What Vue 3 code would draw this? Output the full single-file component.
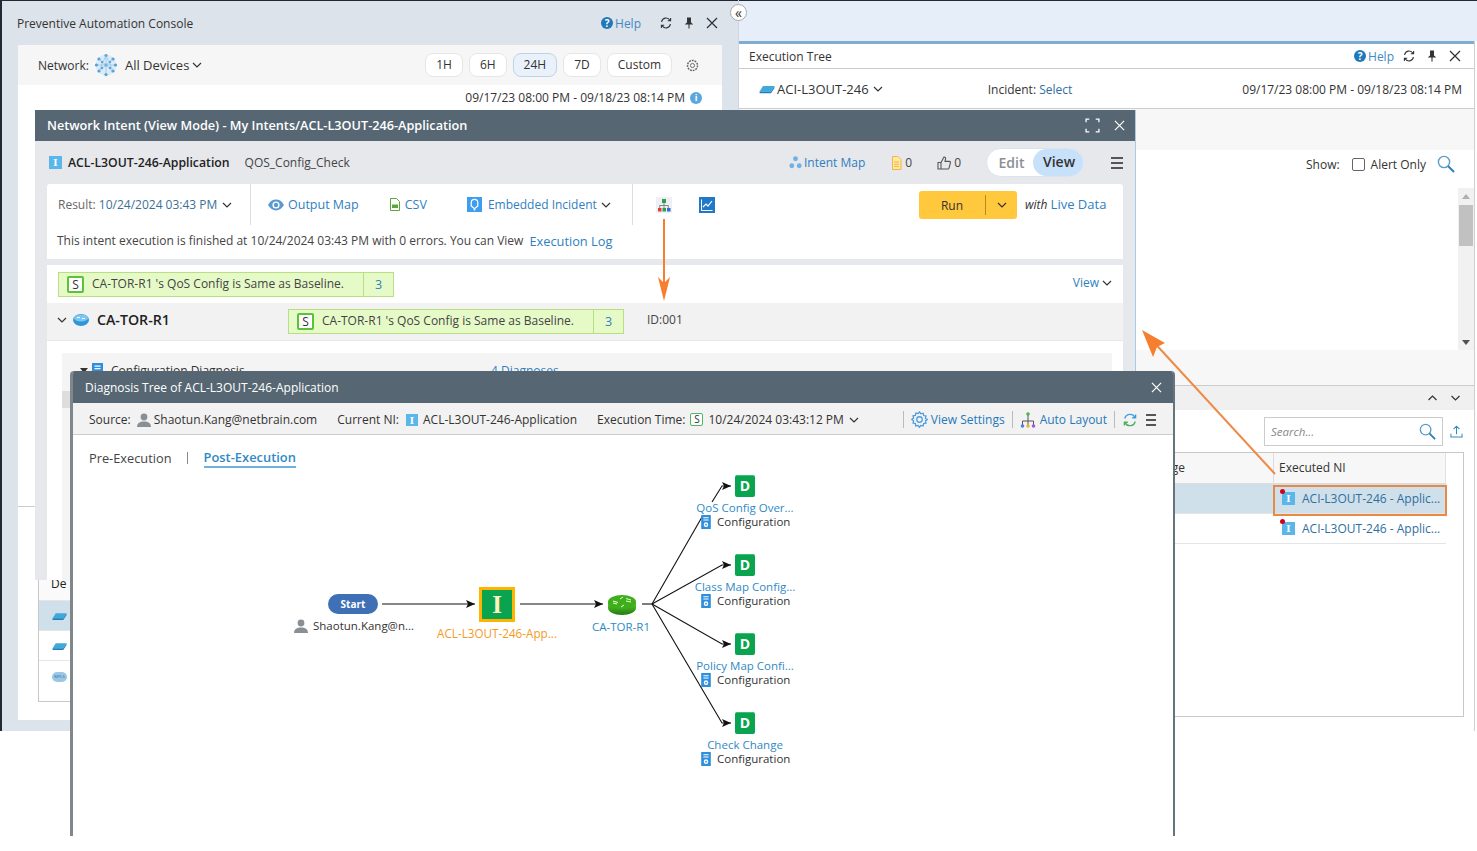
<script setup>
const ranges = [
  { label: '1H' },
  { label: '6H' },
  { label: '24H', active: true },
  { label: '7D' },
  { label: 'Custom' }
]
const ox = 73
const oy = 435
const diagnoses = [
  { name: 'QoS Config Over...', y: 475 },
  { name: 'Class Map Config...', y: 554 },
  { name: 'Policy Map Confi...', y: 633 },
  { name: 'Check Change', y: 712 }
]
const pos = (x, y) => ({ left: x - ox + 'px', top: y - oy + 'px' })
</script>

<template>
  <div class="desk">
    <svg class="defs" width="0" height="0">
      <defs>
        <symbol id="i-close" viewBox="0 0 12 12"><path d="M1 1l10 10M11 1L1 11" fill="none" stroke="currentColor" stroke-width="1.3" /></symbol>
        <symbol id="i-refresh" viewBox="0 0 12 12"><path d="M10 3.400A4.500 4.500 0 0 0 1.600 5M2 8.600A4.500 4.500 0 0 0 10.400 7M10.600 1v2.800H7.800M1.400 11V8.200h2.800" fill="none" stroke="currentColor" stroke-width="1.100" /></symbol>
        <symbol id="i-pin" viewBox="0 0 8 12"><path d="M2 1h4M2.600 1v4.600L1 7h6L5.400 5.600V1M4 7v4.600" fill="currentColor" stroke="currentColor" stroke-width="1.100" /></symbol>
        <symbol id="i-chev" viewBox="0 0 10 6"><path d="M1 1l4 4 4-4" fill="none" stroke="currentColor" stroke-width="1.200" /></symbol>
        <symbol id="i-switch" viewBox="0 0 16 9"><path d="M4 1h11.500L12 6.400H.6z" fill="#3fa9de" /><path d="M.6 6.400H12v1.800H.6zM12 6.400L15.500 1v2L12 8.200z" fill="#1e7fb8" /></symbol>
        <symbol id="i-config" viewBox="0 0 11 16"><path d="M0 0h11v16H0z" fill="#2f8fdc" /><path d="M2.500 2.500h6v1.200h-6zM2.500 5h6v1.200h-6z" fill="#fff" /><circle cx="5.500" cy="11" r="2.600" fill="#fff" /><circle cx="5.500" cy="11" r="1" fill="#2f8fdc" /></symbol>
        <symbol id="i-person" viewBox="0 0 14 14"><circle cx="7" cy="4" r="3.400" fill="#8a8f94" /><path d="M0 14c0-4 3-5.600 7-5.600s7 1.600 7 5.600z" fill="#8a8f94" /></symbol>
        <symbol id="i-search" viewBox="0 0 18 18"><circle cx="7" cy="7" r="5.600" fill="none" stroke="#5a9bc9" stroke-width="1.400" /><path d="M11 11l6 6" stroke="#2f7fb8" stroke-width="2" /></symbol>
      </defs>
    </svg>

    <!-- Left console window -->
    <section class="console">
      <header class="console-title">
        <span class="title-text">Preventive Automation Console</span>
        <span class="win-tools">
          <span class="help"><b class="help-dot">?</b>Help</span>
          <svg class="tool refresh"><use href="#i-refresh" /></svg>
          <svg class="tool pin"><use href="#i-pin" /></svg>
          <svg class="tool"><use href="#i-close" /></svg>
        </span>
      </header>
      <div class="console-card">
        <div class="console-bar">
          <span class="net-label">Network:</span>
          <svg class="net-icon" viewBox="0 0 24 24">
            <circle cx="12" cy="12" r="10.500" fill="#dcebf7" />
            <g fill="#4f9ed6">
              <circle cx="12" cy="2.500" r="1.600" /><circle cx="5" cy="6" r="1.600" /><circle cx="19" cy="6" r="1.600" />
              <circle cx="2.500" cy="12" r="1.600" /><circle cx="21.500" cy="12" r="1.600" /><circle cx="12" cy="12" r="1.600" />
              <circle cx="5" cy="18" r="1.600" /><circle cx="19" cy="18" r="1.600" /><circle cx="12" cy="21.500" r="1.600" />
              <circle cx="8" cy="9" r="1.200" /><circle cx="16" cy="9" r="1.200" /><circle cx="8" cy="15" r="1.200" /><circle cx="16" cy="15" r="1.200" />
            </g>
            <path d="M12 2.500L5 18M12 2.500L19 18M2.500 12h19M5 6l14 12M19 6L5 18M12 2.500v19" stroke="#7fb9e0" stroke-width=".6" />
          </svg>
          <span class="net-name">All Devices</span>
          <svg class="chev"><use href="#i-chev" /></svg>
          <span class="ranges">
            <span v-for="r in ranges" :key="r.label" class="range" :class="{ 'range-on': r.active }">{{ r.label }}</span>
          </span>
          <svg class="cog" viewBox="0 0 14 14"><circle cx="7" cy="7" r="5.400" fill="none" stroke="#666" stroke-width="1.600" stroke-dasharray="2 1" /><circle cx="7" cy="7" r="2.200" fill="none" stroke="#666" /></svg>
        </div>
        <div class="console-date">
          09/17/23 08:00 PM - 09/18/23 08:14 PM
          <b class="info-dot">i</b>
        </div>
        <div class="back-table">
          <div class="back-head">De</div>
          <div class="back-row back-sel"><svg class="back-switch"><use href="#i-switch" /></svg></div>
          <div class="back-row"><svg class="back-switch"><use href="#i-switch" /></svg></div>
          <div class="back-row"><span class="back-cloud">MPLS</span></div>
        </div>
        <div class="console-rule"></div>
      </div>
    </section>

    <button class="collapse">«</button>

    <!-- Right execution tree window -->
    <section class="tree-win">
      <div class="tree-band"></div>
      <header class="tree-title">
        <span class="title-text">Execution Tree</span>
        <span class="win-tools">
          <span class="help tree-help"><b class="help-dot">?</b>Help</span>
          <svg class="tool refresh"><use href="#i-refresh" /></svg>
          <svg class="tool pin"><use href="#i-pin" /></svg>
          <svg class="tool"><use href="#i-close" /></svg>
        </span>
      </header>
      <div class="tree-filter">
        <svg class="tree-switch"><use href="#i-switch" /></svg>
        <span class="tree-device">ACI-L3OUT-246</span>
        <svg class="chev"><use href="#i-chev" /></svg>
        <span class="incident">Incident: <a class="link-dark">Select</a></span>
        <span class="tree-date">09/17/23 08:00 PM - 09/18/23 08:14 PM</span>
      </div>
      <div class="tree-grey"></div>
      <div class="tree-show">
        <span>Show:</span>
        <span class="check"></span>
        <span>Alert Only</span>
        <svg class="show-search"><use href="#i-search" /></svg>
      </div>
      <div class="tree-scroll-area">
        <div class="scrollbar">
          <span class="sb-up"></span>
          <span class="sb-thumb"></span>
          <span class="sb-down"></span>
        </div>
      </div>
      <div class="tree-grey tree-grey2"></div>
      <div class="tree-lower-head">
        <svg class="flip"><use href="#i-chev" /></svg>
        <svg class="lower-chev"><use href="#i-chev" /></svg>
      </div>
      <div class="tree-search-row">
        <div class="search-box">
          <span>Search...</span>
          <svg class="search-ic"><use href="#i-search" /></svg>
        </div>
        <svg class="upload" viewBox="0 0 14 14"><path d="M7 10V1.500M3.800 4.400L7 1.200l3.200 3.200M1 9.500v3.400h12V9.500" fill="none" stroke="#2f8fb8" stroke-width="1.100" /></svg>
      </div>
      <div class="exec-table">
        <div class="exec-head">
          <span class="exec-msg">Message</span>
          <span class="exec-ni">Executed NI</span>
        </div>
        <div class="exec-row exec-sel">
          <span class="exec-cell">
            <span class="ni-flag"><span class="ni-i">I</span><i class="red"></i></span>
            <a class="link-dark">ACI-L3OUT-246 - Applic...</a>
          </span>
        </div>
        <div class="exec-row">
          <span class="exec-cell">
            <span class="ni-flag"><span class="ni-i">I</span><i class="red"></i></span>
            <a class="link-dark">ACI-L3OUT-246 - Applic...</a>
          </span>
        </div>
      </div>
    </section>

    <!-- Network Intent window -->
    <section class="intent">
      <header class="dark-head intent-head">
        <span class="intent-title">Network Intent (View Mode) - My Intents/ACL-L3OUT-246-Application</span>
        <svg class="expand" viewBox="0 0 14 14"><path d="M1 4V1h3M10 1h3v3M13 10v3h-3M4 13H1v-3" fill="none" stroke="#fff" stroke-width="1.200" /></svg>
        <svg class="head-close"><use href="#i-close" /></svg>
      </header>
      <div class="intent-info">
        <span class="ni-i">I</span>
        <b class="intent-name">ACL-L3OUT-246-Application</b>
        <span class="intent-sub">QOS_Config_Check</span>
        <span class="intent-right">
          <svg class="map-ic" viewBox="0 0 14 14"><circle cx="7" cy="3" r="2.600" fill="#6fb0e6" /><circle cx="3" cy="10.500" r="2.600" fill="#6fb0e6" /><circle cx="11" cy="10.500" r="2.600" fill="#6fb0e6" /></svg>
          <a class="link">Intent Map</a>
          <svg class="note-ic" viewBox="0 0 10 14"><path d="M1 .5h5.500l3 3v10H1z" fill="#ffe9a8" stroke="#f0b73f" /><path d="M2.600 6h5M2.600 8.200h5M2.600 10.400h5" stroke="#f0b73f" /></svg>
          <span class="count">0</span>
          <svg class="thumb-ic" viewBox="0 0 14 14"><path d="M1 6.500h3v6.500H1zM4 6.500L7 1c1.600 0 1.800 1.200 1.400 2.400L8 5.400h4.400c.8 0 1.200.8 1 1.400l-1.400 5.400c-.2.6-.6.8-1.200.8H4" fill="none" stroke="#555" stroke-width="1.100" /></svg>
          <span class="count">0</span>
          <span class="mode">
            <span class="mode-edit">Edit</span>
            <span class="mode-view">View</span>
          </span>
          <span class="burger"><i></i><i></i><i></i></span>
        </span>
      </div>
      <div class="result-card">
        <div class="result-bar">
          <span class="res-group">
            <span class="res-text">Result: <span class="res-time">10/24/2024 03:43 PM</span></span>
            <svg class="chev"><use href="#i-chev" /></svg>
          </span>
          <span class="actions">
            <svg class="eye" viewBox="0 0 16 12"><path d="M0 6c2-3.600 4.800-5.400 8-5.400S14 2.400 16 6c-2 3.600-4.800 5.400-8 5.400S2 9.600 0 6z" fill="#5a9ad0" /><circle cx="8" cy="6" r="3.600" fill="#fff" /><circle cx="8" cy="6" r="2.200" fill="#5a9ad0" /></svg>
            <a class="link act">Output Map</a>
            <svg class="csv" viewBox="0 0 10 13"><path d="M.5.5h6l3 3v9H.5z" fill="#fff" stroke="#5da63a" /><path d="M2 6.500h6v3.500H2z" fill="#5da63a" /></svg>
            <a class="link act">CSV</a>
            <svg class="bell" viewBox="0 0 16 16"><path d="M0 0h16v16H0z" fill="#3f9df0" /><path d="M8 2.500a3.500 3.500 0 0 0-3.500 3.500v3.500L8 12.500l3.500-3V6A3.500 3.500 0 0 0 8 2.500z" fill="none" stroke="#fff" stroke-width="1.300" /><circle cx="8" cy="13.500" r="1" fill="#fff" /></svg>
            <a class="link act act-inc">Embedded Incident</a>
            <svg class="chev"><use href="#i-chev" /></svg>
          </span>
          <span class="tool-icons">
            <svg class="tree-ic" viewBox="0 0 16 16"><path d="M0 0h16v16H0z" fill="#eef0f3" /><path d="M6 2h4v4H6z" fill="#2e9e4f" /><path d="M2 11h3.500v3.500H2z" fill="#e23a3a" /><path d="M6.500 11H10v3.500H6.500z" fill="#2e9e4f" /><path d="M11 11h3.500v3.500H11z" fill="#2f6fd0" /><path d="M8 6v5M3.700 11V8.500h8.600V11" fill="none" stroke="#888" /></svg>
            <svg class="chart-ic" viewBox="0 0 16 16"><path d="M0 0h16v16H0z" fill="#1f78c8" /><path d="M2.500 2.500v11h11" fill="none" stroke="#fff" /><path d="M4 10l3-3 2 2 4-5" fill="none" stroke="#fff" stroke-width="1.200" /></svg>
          </span>
          <span class="run">
            <span class="run-label">Run</span>
            <span class="run-sep"></span>
            <svg class="run-chev"><use href="#i-chev" /></svg>
          </span>
          <span class="live"><em>with</em> <a class="link">Live Data</a></span>
        </div>
        <div class="result-msg">
          <span>This intent execution is finished at 10/24/2024 03:43 PM with 0 errors. You can View</span>
          <a class="link log">Execution Log</a>
        </div>
      </div>
      <div class="detail-card">
        <div class="sum-row">
          <div class="status">
            <span class="status-s">S</span>
            <span class="status-text">CA-TOR-R1 's QoS Config is Same as Baseline.</span>
            <span class="status-n">3</span>
          </div>
          <span class="view-link"><a class="link">View</a><svg class="chev"><use href="#i-chev" /></svg></span>
        </div>
        <div class="device-row">
          <svg class="dev-chev"><use href="#i-chev" /></svg>
          <svg class="dev-ic" viewBox="0 0 16 12"><ellipse cx="8" cy="6" rx="8" ry="6" fill="#2f95d8" /><ellipse cx="8" cy="4" rx="7" ry="3.600" fill="#7cc6f0" /><path d="M4 3.500h3M9 4.500h3" stroke="#fff" /></svg>
          <b class="dev-name">CA-TOR-R1</b>
          <div class="status status2">
            <span class="status-s">S</span>
            <span class="status-text">CA-TOR-R1 's QoS Config is Same as Baseline.</span>
            <span class="status-n">3</span>
          </div>
          <span class="dev-id">ID:001</span>
        </div>
        <div class="config-wrap">
          <div class="config">
            <div class="config-line">
              <span class="cfg-caret"></span>
              <svg class="cfg-ic"><use href="#i-config" /></svg>
              <span class="cfg-name">Configuration Diagnosis</span>
              <a class="link cfg-count">4 Diagnoses</a>
            </div>
            <div class="config-strip"></div>
          </div>
        </div>
      </div>
    </section>

    <!-- Diagnosis tree window -->
    <section class="diag">
      <header class="dark-head diag-head">
        <span class="diag-title">Diagnosis Tree of ACL-L3OUT-246-Application</span>
        <svg class="head-close diag-close"><use href="#i-close" /></svg>
      </header>
      <div class="diag-bar">
        <span>Source:</span>
        <svg class="person"><use href="#i-person" /></svg>
        <span class="src-name">Shaotun.Kang@netbrain.com</span>
        <span class="cur-label">Current NI:</span>
        <span class="ni-i ni-sm">I</span>
        <span class="cur-name">ACL-L3OUT-246-Application</span>
        <span class="exe-label">Execution Time:</span>
        <span class="s-mini">S</span>
        <span class="exe-time">10/24/2024 03:43:12 PM</span>
        <svg class="chev"><use href="#i-chev" /></svg>
        <span class="bar-tools">
          <span class="vsep"></span>
          <svg class="gear" viewBox="0 0 16 16"><path d="M8 .8l1.300 1.800 2.200-.5.400 2.200 2.200.5-.5 2.200L15.400 8l-1.800 1.300.5 2.200-2.200.4-.5 2.200-2.200-.5L8 15.400l-1.300-1.800-2.200.5-.4-2.200-2.200-.5.5-2.200L.6 8l1.800-1.300-.5-2.200 2.200-.4.500-2.200 2.200.5z" fill="none" stroke="#4f9be0" stroke-width="1.200" /><circle cx="8" cy="8" r="2.600" fill="none" stroke="#4f9be0" stroke-width="1.200" /></svg>
          <a class="link-strong">View Settings</a>
          <span class="vsep"></span>
          <svg class="auto" viewBox="0 0 16 16"><path d="M8 2.500V9M2.500 13V9h11v4M8 9v4" fill="none" stroke="#555" /><circle cx="8" cy="2" r="1.800" fill="#57b04f" /><circle cx="2.500" cy="14" r="1.800" fill="#4f7fe0" /><circle cx="8" cy="14" r="1.800" fill="#f0b040" /><circle cx="13.500" cy="14" r="1.800" fill="#9a60d0" /></svg>
          <a class="link-strong">Auto Layout</a>
          <span class="vsep"></span>
          <svg class="sync" viewBox="0 0 14 14"><path d="M11.800 4.200A5.400 5.400 0 0 0 1.800 5.500" fill="none" stroke="#3f9be0" stroke-width="1.400" /><path d="M2.200 9.800a5.400 5.400 0 0 0 10-1.300" fill="none" stroke="#4fb060" stroke-width="1.400" /><path d="M12.600 1.400v3.400H9.200" fill="none" stroke="#3f9be0" stroke-width="1.400" /><path d="M1.400 12.600V9.200h3.400" fill="none" stroke="#4fb060" stroke-width="1.400" /></svg>
          <span class="burger burger-sm"><i></i><i></i><i></i></span>
        </span>
      </div>
      <div class="canvas">
        <div class="tabs">
          <span class="tab">Pre-Execution</span>
          <span class="tab-sep"></span>
          <span class="tab-on">Post-Execution</span>
        </div>
        <svg class="edges" viewBox="73 435 1100 401">
          <defs>
            <marker id="ah" markerWidth="10" markerHeight="8" refX="9" refY="4" orient="auto" markerUnits="userSpaceOnUse"><path d="M0 0l9 4-9 4 2-4z" fill="#111" /></marker>
          </defs>
          <g fill="none" stroke="#111" stroke-width="1.100">
            <path d="M382 604H475" marker-end="url(#ah)" />
            <path d="M520 604H603" marker-end="url(#ah)" />
            <path d="M642 604H652" />
            <path d="M652 604L702 517" />
            <path d="M712 502L722 486H731" marker-end="url(#ah)" />
            <path d="M652 604L722 565H731" marker-end="url(#ah)" />
            <path d="M652 604L722 644H731" marker-end="url(#ah)" />
            <path d="M652 604L722 723H731" marker-end="url(#ah)" />
          </g>
        </svg>

        <span class="start" :style="pos(328, 594)">Start</span>
        <span class="who" :style="pos(294, 618)">
          <svg class="person"><use href="#i-person" /></svg>
          <span>Shaotun.Kang@n...</span>
        </span>
        <span class="i-node" :style="pos(479, 587)">I</span>
        <span class="node-label orange" :style="pos(427, 625)">ACL-L3OUT-246-App...</span>
        <svg class="router" :style="pos(608, 595)" viewBox="0 0 28 20">
          <defs><linearGradient id="rg" x1="0" x2="0" y1="0" y2="1"><stop offset="0" stop-color="#5fd02a" /><stop offset="1" stop-color="#1e7a10" /></linearGradient></defs>
          <path d="M0 7v6c0 3.800 6.300 7 14 7s14-3.200 14-7V7z" fill="url(#rg)" />
          <ellipse cx="14" cy="7" rx="14" ry="7" fill="#3fae1c" />
          <path d="M5 6l5 1.500M9 9l-4-1M18 3.500l5 1.500M23 7l-5-1M12 4l3-2M16 10l-3 2" stroke="#eaffd8" stroke-width="1" />
        </svg>
        <span class="node-label blue" :style="pos(551, 619)">CA-TOR-R1</span>

        <template v-for="d in diagnoses" :key="d.name">
          <span class="d-node" :style="pos(735, d.y)">D</span>
          <span class="node-label blue" :style="pos(675, d.y + 25)">{{ d.name }}</span>
          <span class="cfg-node" :style="pos(701, d.y + 40)">
            <svg class="cfg-mini"><use href="#i-config" /></svg>
            <span>Configuration</span>
          </span>
        </template>
      </div>
    </section>

    <!-- Annotation arrows -->
    <svg class="annot" viewBox="0 0 1477 851">
      <path d="M664 219V285" stroke="#f57f2e" stroke-width="2" fill="none" />
      <path d="M658 277L664 301L670 277L664 283z" fill="#f57f2e" />
      <path d="M1275 474L1150 338" stroke="#ee8a45" stroke-width="2" fill="none" />
      <path d="M1142 330L1165 343L1157 347L1153 357z" fill="#f57f2e" />
      <rect x="1274" y="486" width="172" height="29" fill="none" stroke="#e88a45" stroke-width="2" />
    </svg>
  </div>
</template>

<style>
html, body { margin: 0; background: #fff; }
</style>

<style scoped>
.desk {
  position: relative;
  width: 1477px;
  height: 851px;
  overflow: hidden;
  background: #fff;
  font-family: "Open Sans", "Noto Sans", sans-serif;
  font-size: 12px;
  color: #333;
}
.defs { position: absolute; }
a { cursor: pointer; }
.link { color: #2f7fc1; }
.link-dark { color: #2f6f9f; }
.link-strong { color: #1f79b8; white-space: nowrap; }

/* console */
.console {
  position: absolute;
  left: 0;
  top: 0;
  width: 738px;
  height: 731px;
  box-sizing: border-box;
  background: #dde3ea;
  border-left: 2px solid #1f2a36;
  border-top: 1px solid #1f2a36;
}
.console-title {
  display: flex;
  align-items: center;
  height: 44px;
  padding: 0 20px 0 15px;
  box-sizing: border-box;
}
.title-text { color: #333; font-size: 12px; white-space: nowrap; }
.win-tools { margin-left: auto; display: flex; align-items: center; gap: 13px; }
.help { display: flex; align-items: center; color: #3d8bc4; margin-right: 6px; }
.tree-help { margin-right: -4px; }
.help-dot {
  width: 12px; height: 12px; border-radius: 50%;
  background: #1f78b8; color: #fff;
  font-size: 10px; line-height: 12px; text-align: center; font-weight: 700;
  margin-right: 2px;
}
.tool { width: 12px; height: 12px; color: #333; }
.pin { width: 8px; }
.console-card {
  position: relative;
  margin-left: 16px;
  width: 704px;
  height: 675px;
  background: #fff;
}
.console-bar {
  display: flex;
  align-items: center;
  height: 40px;
  padding: 0 23px 0 20px;
  background: #f6f6f6;
}
.net-label { margin-right: 5px; }
.net-icon { width: 24px; height: 24px; margin-right: 7px; }
.net-name { font-size: 13px; margin-right: 3px; }
.chev { width: 10px; height: 6px; color: #333; flex: none; }
.ranges { margin-left: auto; display: flex; gap: 6px; margin-right: 14px; }
.range {
  display: block;
  padding: 0 10px;
  height: 24px;
  line-height: 22px;
  box-sizing: border-box;
  border: 1px solid #e6e6e6;
  border-radius: 8px;
  background: #fff;
}
.range-on { background: #e9f2fb; border-color: #bcd4ea; }
.cog { width: 13px; height: 13px; }
.console-date {
  display: flex;
  justify-content: flex-end;
  align-items: center;
  height: 25px;
  padding-right: 20px;
  gap: 5px;
}
.info-dot {
  width: 12px; height: 12px; border-radius: 50%;
  background: #5aa7de; color: #fff;
  font-size: 9px; line-height: 12px; text-align: center;
}
.console-rule {
  position: absolute;
  left: 0; top: 461px;
  width: 30px;
  border-top: 1px solid #ccc;
}
.back-table {
  position: absolute;
  left: 20px;
  top: 529px;
  width: 60px;
  height: 126px;
  border: 1px solid #c8c8c8;
}
.back-head { height: 25px; line-height: 17px; padding: 0 0 0 12px; color: #222; background: #fafafa; }
.back-row { height: 30px; box-sizing: border-box; padding: 11px 0 0 13px; border-top: 1px solid #e6e6e6; }
.back-sel { background: #cfe0ea; }
.back-switch { width: 15px; height: 9px; display: block; }
.back-cloud {
  display: block; width: 15px; height: 10px;
  background: #9cc6e6; border-radius: 5px;
  color: #2f6f9f; font-size: 4px; line-height: 10px; text-align: center;
}

.collapse {
  position: absolute;
  left: 730px; top: 4px;
  width: 17px; height: 17px;
  padding: 0;
  border: 1px solid #aaa;
  border-radius: 50%;
  background: #fff;
  color: #333;
  font-size: 14px;
  line-height: 12px;
  font-family: inherit;
  z-index: 2;
}

/* execution tree */
.tree-win {
  position: absolute;
  left: 738px; top: 0;
  width: 737px;
  height: 731px;
  background: #fff;
  border-left: 1px solid #cfd6dd;
  box-sizing: border-box;
  border-right: 1px solid #cfcfcf;
}
.tree-band {
  height: 41px;
  margin-right: -4px;
  box-sizing: border-box;
  background: #e6eef9;
  border-top: 1px solid #1f2a36;
}
.tree-title {
  display: flex;
  align-items: center;
  height: 28px;
  padding: 0 13px 0 10px;
  box-sizing: border-box;
  border-top: 3px solid #7fadd0;
  border-bottom: 1px solid #ccc;
}
.tree-filter {
  display: flex;
  align-items: center;
  height: 40px;
  padding: 1px 12px 0 20px;
  box-sizing: border-box;
  border-bottom: 1px solid #ccc;
}
.tree-switch { width: 16px; height: 9px; margin-right: 2px; }
.tree-device { font-size: 13px; white-space: nowrap; }
.tree-filter .chev { margin-left: 4px; }
.incident { margin-left: 105px; }
.tree-date { margin-left: auto; }
.tree-grey { height: 41px; background: #f7f7f7; }
.tree-show {
  display: flex;
  align-items: center;
  justify-content: flex-end;
  height: 28px;
  padding-right: 19px;
  box-sizing: border-box;
}
.check {
  width: 11px; height: 11px;
  border: 1px solid #666;
  border-radius: 2px;
  margin: 0 6px 0 12px;
}
.show-search { width: 18px; height: 18px; margin-left: 11px; }
.tree-scroll-area { height: 162px; margin-top: 10px; display: flex; justify-content: flex-end; }
.scrollbar {
  width: 16px;
  background: #f1f1f1;
  display: flex;
  flex-direction: column;
  align-items: center;
  position: relative;
}
.sb-up {
  margin-top: 6px;
  border: 4px solid transparent;
  border-top: 0;
  border-bottom: 5px solid #b0b0b0;
}
.sb-thumb { width: 14px; height: 41px; background: #c1c1c1; margin-top: 6px; }
.sb-down {
  position: absolute; bottom: 5px;
  border: 4px solid transparent;
  border-bottom: 0;
  border-top: 5px solid #505050;
}
.tree-grey2 { height: 35px; }
.tree-lower-head {
  display: flex;
  align-items: center;
  justify-content: flex-end;
  gap: 12px;
  height: 25px;
  box-sizing: border-box;
  padding-right: 13px;
  background: #f0f0f0;
  border-top: 1px solid #ccc;
}
.flip { width: 11px; height: 6px; transform: rotate(180deg); color: #333; }
.lower-chev { width: 11px; height: 6px; color: #333; }
.tree-search-row {
  display: flex;
  align-items: center;
  justify-content: flex-end;
  height: 42px;
  padding: 0 11px 0 0;
  box-sizing: border-box;
}
.search-box {
  display: flex;
  align-items: center;
  justify-content: space-between;
  width: 179px;
  height: 29px;
  box-sizing: border-box;
  padding: 0 6px;
  border: 1px solid #ccc;
  color: #888;
  font-style: italic;
  font-size: 11.5px;
  margin-right: 7px;
}
.search-ic { width: 17px; height: 17px; }
.upload { width: 13px; height: 13px; }
.exec-table {
  margin: 0 10px 0 290px;
  height: 265px;
  box-sizing: border-box;
  border: 1px solid #c8c8c8;
}
.exec-head {
  display: flex;
  width: 416px;
  height: 30px;
  line-height: 29px;
  background: #f7f7f7;
  border-bottom: 1px solid #ddd;
  white-space: nowrap;
}
.exec-msg {
  width: 244px;
  padding-right: 88px;
  box-sizing: border-box;
  text-align: right;
  border-right: 1px solid #ddd;
}
.exec-ni { width: 172px; padding-left: 5px; box-sizing: border-box; color: #333; border-right: 1px solid #e0e0e0; }
.exec-row {
  height: 30px;
  width: 416px;
  border-bottom: 1px solid #e4e4e4;
  box-sizing: border-box;
  display: flex;
  justify-content: flex-end;
  align-items: center;
}
.exec-sel { background: #cfe0ea; }
.exec-cell {
  width: 172px;
  display: flex;
  align-items: center;
  white-space: nowrap;
  padding-left: 8px;
  box-sizing: border-box;
  font-size: 12px;
}
.ni-i {
  display: inline-block;
  width: 13px; height: 13px;
  background: #5ab7ea;
  color: #fff;
  font-family: "Liberation Serif", serif;
  font-weight: 700;
  font-size: 11px;
  line-height: 13px;
  text-align: center;
  flex: none;
}
.ni-flag { position: relative; display: flex; margin-right: 7px; }
.red {
  position: absolute;
  left: -2px; top: -3px;
  width: 5px; height: 5px;
  border-radius: 50%;
  background: #d0021b;
}

/* intent */
.intent {
  position: absolute;
  left: 35px; top: 110px;
  width: 1100px;
  height: 470px;
  background: #e6e8ec;
  border-right: 1px solid #a9cbe4;
  z-index: 3;
}
.dark-head { background: #566773; color: #fff; display: flex; align-items: center; }
.intent-head { height: 31px; padding: 0 10px 0 12px; }
.intent-title { margin-top: -2px; font-size: 12.7px; font-weight: 600; white-space: nowrap; }
.expand { width: 15px; height: 15px; margin-left: auto; }
.head-close { width: 11px; height: 11px; color: #fff; margin-left: 14px; }
.intent-info {
  display: flex;
  align-items: center;
  height: 43px;
  padding: 0 12px 0 14px;
  box-sizing: border-box;
}
.intent-name { margin-left: 6px; font-size: 12.25px; font-weight: 600; color: #222; white-space: nowrap; }
.intent-sub { margin-left: 15px; color: #444; white-space: nowrap; }
.intent-right { margin-left: auto; display: flex; align-items: center; }
.map-ic { width: 13px; height: 13px; margin-right: 2px; }
.note-ic { width: 11px; height: 14px; margin: 0 3px 0 26px; }
.count { color: #444; }
.thumb-ic { width: 14px; height: 14px; margin: 0 3px 0 25px; }
.mode {
  display: flex;
  align-items: center;
  width: 98px;
  height: 29px;
  margin-left: 25px;
  box-sizing: border-box;
  border: 1px solid #d8e4f0;
  border-radius: 15px;
  background: #fff;
  font-size: 14px;
  font-weight: 600;
}
.mode-edit { width: 46px; padding-left: 3px; box-sizing: border-box; text-align: center; color: #8a8f94; }
.mode-view {
  flex: 1; height: 100%;
  padding-left: 2px;
  box-sizing: border-box;
  border-radius: 14px;
  background: #c8e1fa;
  color: #333;
  line-height: 26px;
  text-align: center;
}
.burger { display: flex; flex-direction: column; gap: 3px; margin-left: 27px; }
.burger i { display: block; width: 12px; height: 2px; background: #555; }
.burger-sm { margin-left: 9px; }
.burger-sm i { width: 10px; }
.result-card { margin: 0 12px; background: #fff; height: 75px; border-radius: 3px 3px 0 0; }
.result-bar {
  display: flex;
  align-items: center;
  height: 41px;
  position: relative;
}
.res-group {
  width: 204px;
  height: 41px;
  box-sizing: border-box;
  padding-left: 11px;
  display: flex;
  align-items: center;
  gap: 5px;
  border-right: 1px solid #ddd;
  flex: none;
}
.res-text { color: #666; white-space: nowrap; }
.res-time { color: #3d6f94; }
.actions {
  width: 382px;
  height: 41px;
  box-sizing: border-box;
  padding-left: 17px;
  display: flex;
  align-items: center;
  border-right: 1px solid #ddd;
  flex: none;
}
.eye { width: 16px; height: 12px; margin-right: 4px; }
.act { white-space: nowrap; font-size: 12.5px; }
.csv { width: 10px; height: 13px; margin: 0 5px 0 31px; }
.bell { width: 15px; height: 15px; margin: 0 6px 0 40px; }
.act-inc { margin-right: 4px; font-size: 12px; }
.tool-icons { display: flex; gap: 27px; padding-left: 23px; }
.tree-ic, .chart-ic { width: 16px; height: 16px; }
.run {
  position: absolute;
  left: 872px; top: 7px;
  width: 98px; height: 28px;
  background: #ffc83d;
  border-radius: 3px;
  display: flex;
  align-items: center;
  color: #333;
}
.run-label { width: 66px; text-align: center; }
.run-sep { width: 1px; height: 20px; background: #b8892a; }
.run-chev { width: 10px; height: 6px; margin-left: 11px; color: #333; }
.live { position: absolute; left: 978px; top: 11px; white-space: nowrap; font-size: 12px; }
.live em { color: #333; }
.live a { font-size: 13px; }
.result-msg {
  display: flex;
  align-items: center;
  height: 33px;
  padding: 0 0 2px 10px;
  box-sizing: border-box;
  color: #444;
  font-size: 12px;
  white-space: nowrap;
}
.log { margin-left: 6px; font-size: 12.8px; }
.detail-card { margin: 6px 12px 0; background: #fff; height: 315px; }
.sum-row { display: flex; align-items: center; height: 38px; padding: 0 11px; box-sizing: border-box; }
.status {
  display: flex;
  align-items: center;
  width: 336px;
  height: 25px;
  box-sizing: border-box;
  background: #e6fac8;
  border: 1px solid #b9de85;
  font-size: 12px;
  color: #444;
  flex: none;
}
.status-s {
  width: 13px; height: 13px;
  margin-left: 8px;
  border: 2px solid #5cc23a;
  border-radius: 2px;
  background: #fff;
  color: #333;
  font-size: 12px;
  line-height: 13px;
  text-align: center;
  flex: none;
}
.status-text { margin: -2px 0 0 8px; width: 271px; white-space: nowrap; }
.status-n {
  flex: 1;
  align-self: stretch;
  border-left: 1px solid #b9de85;
  text-align: center;
  line-height: 23px;
  font-size: 12.5px;
  color: #2f7fc1;
}
.view-link { margin: -3px 0 0 auto; display: flex; align-items: center; gap: 3px; }
.device-row {
  display: flex;
  align-items: center;
  height: 38px;
  background: #f2f2f2;
  padding: 0 0 4px 10px;
  border-bottom: 1px solid #e8e8e8;
  box-sizing: border-box;
}
.dev-chev { width: 10px; height: 6px; color: #333; }
.dev-ic { width: 16px; height: 12px; margin-left: 6px; }
.dev-name { margin-left: 8px; width: 191px; font-size: 14.2px; font-weight: 600; color: #222; white-space: nowrap; }
.status2 { margin-top: 4px; }
.dev-id { margin-left: 23px; color: #444; }
.config-wrap { padding: 12px 11px 0 15px; }
.config {
  height: 228px;
  background: #f4f4f4;
  padding-left: 18px;
}
.config-line {
  height: 18px;
  overflow: hidden;
  display: flex;
  align-items: flex-start;
  line-height: 36px;
  white-space: nowrap;
}
.cfg-caret { width: 0; height: 0; margin: 15px 4px 0 0; border: 4px solid transparent; border-top: 5px solid #333; }
.cfg-ic { width: 11px; height: 16px; margin-top: 10px; flex: none; }
.cfg-name { margin-left: 8px; width: 380px; }
.config-strip { height: 17px; margin: 20px 0 0 -18px; background: #ddd; }

/* diagnosis */
.diag {
  position: absolute;
  left: 70px; top: 371px;
  width: 1105px;
  height: 465px;
  box-sizing: border-box;
  background: #fff;
  border-left: 3px solid #7f878d;
  border-right: 2px solid #66747e;
  border-radius: 4px 4px 0 0;
  overflow: hidden;
  z-index: 4;
}
.diag-head { height: 32px; padding: 0 11px 0 12px; font-size: 12px; }
.diag-title { white-space: nowrap; }
.diag-close { margin-left: auto; width: 11px; height: 11px; }
.diag-bar {
  display: flex;
  align-items: center;
  height: 32px;
  padding: 2px 17px 0 16px;
  box-sizing: border-box;
  background: #f2f2f2;
  border-bottom: 1px solid #ccc;
  white-space: nowrap;
  color: #333;
}
.person { width: 14px; height: 14px; margin-left: 6px; flex: none; }
.src-name { margin-left: 3px; }
.cur-label { margin-left: 20px; }
.ni-sm { margin-left: 7px; width: 12px; height: 12px; line-height: 12px; }
.cur-name { margin-left: 5px; }
.exe-label { margin-left: 20px; }
.s-mini {
  width: 11px; height: 11px;
  margin-left: 5px;
  border: 1.5px solid #4cb860;
  border-radius: 2px;
  font-size: 10px;
  line-height: 11px;
  text-align: center;
  background: #fff;
}
.exe-time { margin: 0 5px; }
.bar-tools { margin-left: auto; display: flex; align-items: center; }
.vsep { width: 1px; height: 17px; background: #bbb; margin: 0 7px; }
.gear { width: 17px; height: 17px; margin-right: 3px; }
.auto { width: 16px; height: 16px; margin-right: 4px; }
.sync { width: 14px; height: 14px; margin-left: 1px; }
.canvas { position: relative; height: 401px; }
.edges { position: absolute; left: 0; top: 0; width: 1100px; height: 401px; }
.tabs { position: absolute; left: 16px; top: 13px; display: flex; align-items: center; }
.tab { color: #444; font-size: 12.8px; }
.tab-sep { width: 1px; height: 12px; background: #888; margin: 0 16px 0 15px; }
.tab-on {
  color: #2f8ac4; font-size: 12.9px; font-weight: 600;
  border-bottom: 2px solid #6fb0dc;
}
.start {
  position: absolute;
  width: 50px; height: 20px;
  border-radius: 10px;
  background: #3f6fb5;
  color: #fff;
  font-size: 10px;
  font-weight: 700;
  line-height: 20px;
  text-align: center;
}
.who { position: absolute; display: flex; align-items: center; gap: 5px; font-size: 11.5px; white-space: nowrap; color: #333; }
.who .person { margin: 0; }
.i-node {
  position: absolute;
  width: 30px; height: 29px;
  border: 3px solid #ffb400;
  background: #0aa350;
  color: #fdf3c0;
  font-family: "Liberation Serif", serif;
  font-weight: 700;
  font-size: 25px;
  line-height: 29px;
  text-align: center;
}
.node-label {
  position: absolute;
  width: 140px;
  text-align: center;
  font-size: 11.5px;
  white-space: nowrap;
  line-height: 16px;
}
.orange { color: #f59a1e; font-size: 11.7px; }
.blue { color: #2f8ac4; }
.router { position: absolute; width: 28px; height: 20px; }
.d-node {
  position: absolute;
  width: 20px; height: 22px;
  border-radius: 2px;
  background: #0aa350;
  border-top: 1px solid #39c070;
  box-sizing: border-box;
  color: #fff;
  font-weight: 700;
  font-size: 14px;
  line-height: 20px;
  text-align: center;
}
.cfg-node { position: absolute; display: flex; align-items: center; font-size: 11.5px; color: #333; white-space: nowrap; line-height: 14px; }
.cfg-mini { width: 10px; height: 14px; margin-right: 6px; }

.annot { position: absolute; left: 0; top: 0; width: 1477px; height: 851px; z-index: 5; pointer-events: none; }
</style>
